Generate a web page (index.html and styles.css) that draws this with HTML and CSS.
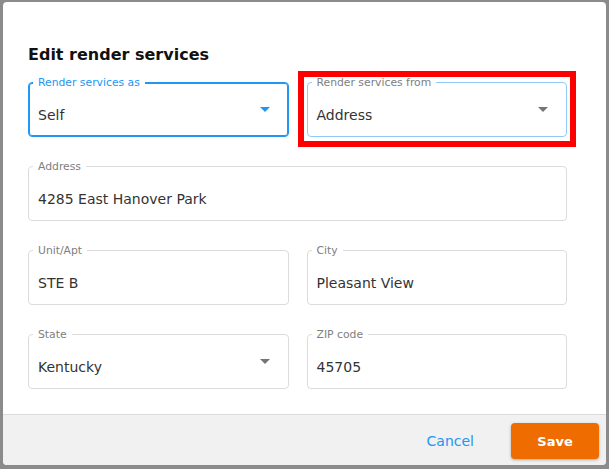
FILE: index.html
```html
<!DOCTYPE html>
<html lang="en">
<head>
    <meta charset="UTF-8">
    <meta name="viewport" content="width=device-width, initial-scale=1.0">
    <title>Edit render services</title>
    <link rel="stylesheet" href="styles.css">
</head>
<body>
    <div class="dialog">
        <div class="dialog-body">
            <h2 class="dialog-title">Edit render services</h2>

            <div class="form">
                <div class="field select focused">
                    <span class="label">Render services as</span>
                    <span class="value">Self</span>
                    <span class="arrow"></span>
                </div>
                <div class="field select hovered marked">
                    <span class="label">Render services from</span>
                    <span class="value">Address</span>
                    <span class="arrow"></span>
                </div>
                <div class="field wide">
                    <span class="label">Address</span>
                    <span class="value">4285 East Hanover Park</span>
                </div>
                <div class="field">
                    <span class="label">Unit/Apt</span>
                    <span class="value">STE B</span>
                </div>
                <div class="field">
                    <span class="label">City</span>
                    <span class="value">Pleasant View</span>
                </div>
                <div class="field select">
                    <span class="label">State</span>
                    <span class="value">Kentucky</span>
                    <span class="arrow"></span>
                </div>
                <div class="field">
                    <span class="label">ZIP code</span>
                    <span class="value">45705</span>
                </div>
            </div>
        </div>

        <div class="dialog-footer">
            <button class="btn-cancel" type="button">Cancel</button>
            <button class="btn-save" type="button">Save</button>
        </div>
    </div>
</body>
</html>
```

FILE: styles.css
```css
body {
    margin: 0;
    padding: 2px 3px 4px 3px;
    background-color: #8b8b8b;
    font-family: "DejaVu Sans", Verdana, sans-serif;
    color: #333;
}
.dialog {
    height: 463px;
    background-color: #fff;
    border-radius: 4px;
    overflow: hidden;
    display: flex;
    flex-direction: column;
}
.dialog-body {
    flex: 1;
    padding: 43px 39px 0 25px;
}
.dialog-title {
    margin: 0 0 17px 0;
    font-size: 16px;
    line-height: 20px;
    font-weight: bold;
    color: #111;
}
.form {
    display: grid;
    grid-template-columns: 1fr 1fr;
    column-gap: 18px;
    row-gap: 29px;
}
.field {
    position: relative;
    height: 55px;
    box-sizing: border-box;
    border: 1px solid #dcdcdc;
    border-radius: 4px;
    padding: 12px 9px 0 9px;
    display: flex;
    align-items: center;
}
.field.wide {
    grid-column: 1 / span 2;
}
.field.focused {
    border-color: #2196f3;
    box-shadow: inset 0 0 0 1px #2196f3;
}
.field.hovered {
    border-color: #90caf9;
}
.field.marked::after {
    content: "";
    position: absolute;
    top: -12px;
    bottom: -11px;
    left: -10px;
    right: -10px;
    border: 6px solid #ff0000;
}
.label {
    position: absolute;
    top: -6px;
    left: 4px;
    padding: 0 5px;
    background-color: #fff;
    font-size: 10.8px;
    line-height: 12px;
    color: #808080;
}
.focused .label {
    color: #2196f3;
}
.value {
    flex: 1;
    font-size: 14px;
    line-height: 17px;
    color: #333;
}
.arrow {
    width: 0;
    height: 0;
    margin: 0 9px 12px 0;
    border-left: 5px solid transparent;
    border-right: 5px solid transparent;
    border-top: 5px solid #757575;
}
.focused .arrow {
    border-top-color: #2196f3;
}
.dialog-footer {
    border-top: 1px solid #dcdcdc;
    background-color: #f1f1f1;
    padding: 8px 7px 6px 0;
    display: flex;
    justify-content: flex-end;
    align-items: center;
    gap: 21px;
}
.btn-cancel {
    height: 36px;
    padding: 0 16px;
    border: none;
    background: none;
    font-family: inherit;
    font-size: 14px;
    color: #2196f3;
    cursor: pointer;
}
.btn-save {
    width: 88px;
    height: 36px;
    border: none;
    border-radius: 4px;
    background-color: #ef6c00;
    color: #fff;
    font-family: inherit;
    font-size: 13px;
    font-weight: bold;
    box-shadow: 0 1px 3px rgba(0, 0, 0, 0.3);
    cursor: pointer;
}
```
